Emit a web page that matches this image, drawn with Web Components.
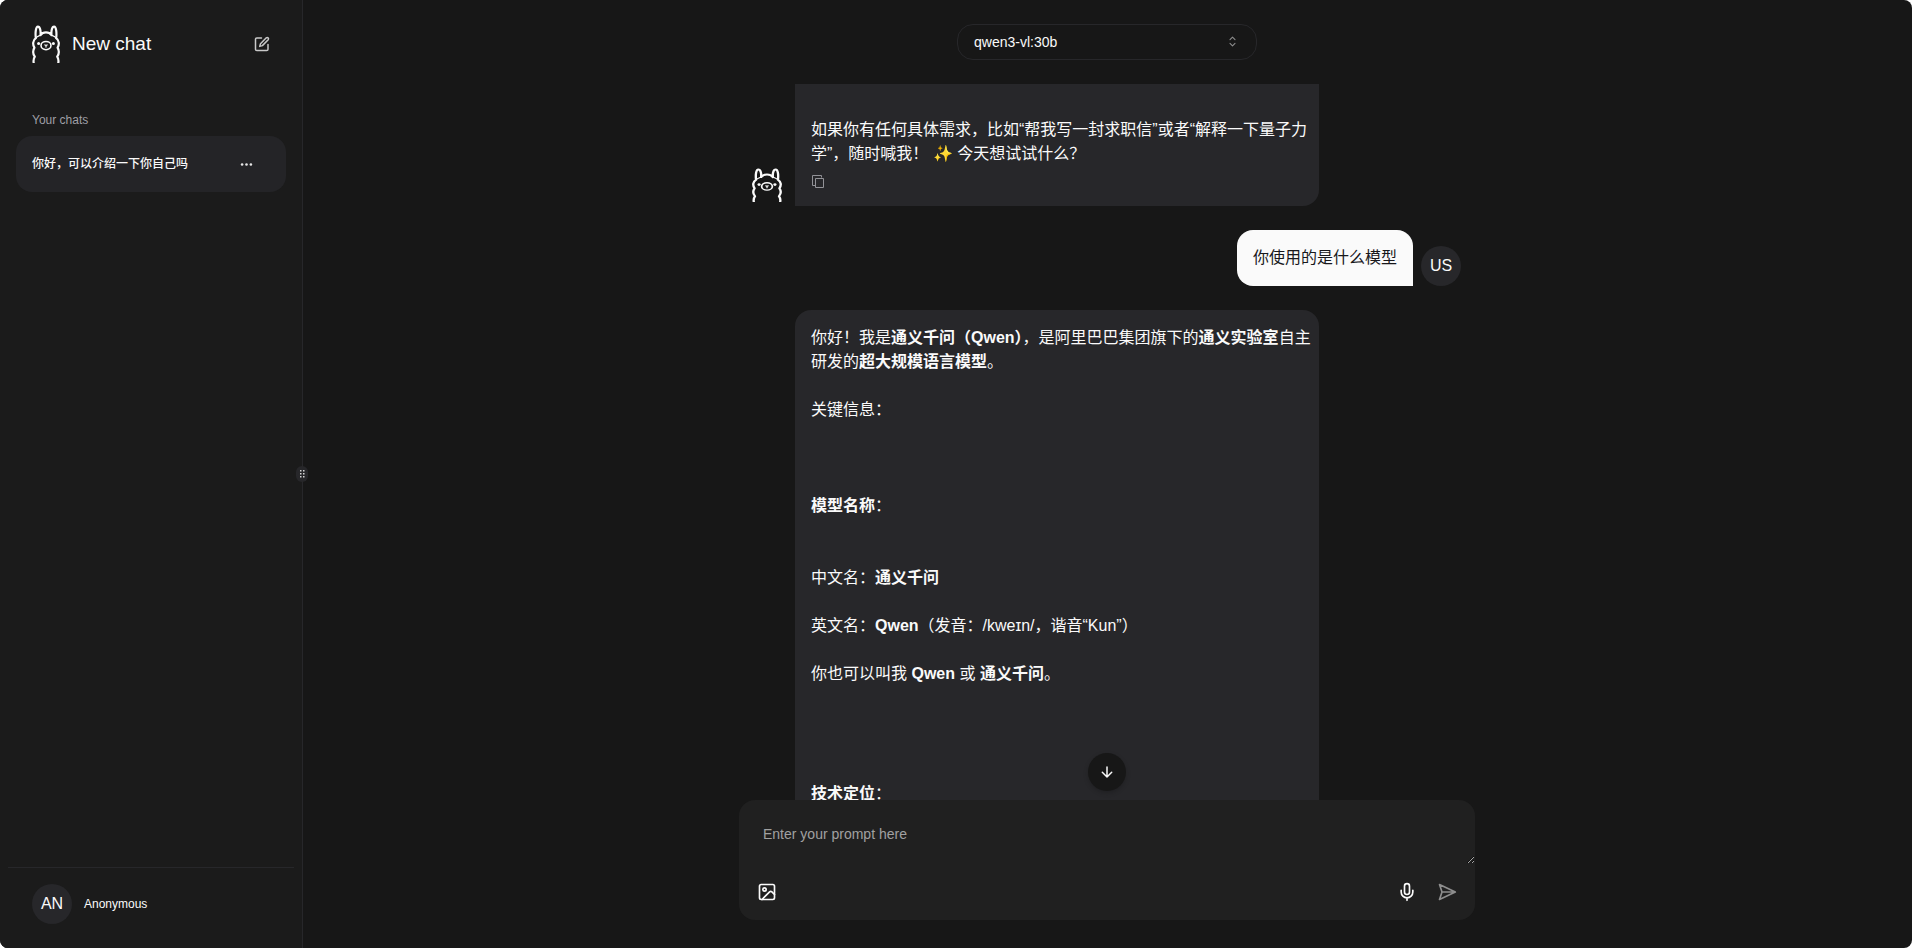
<!DOCTYPE html>
<html lang="zh-CN">
<head>
<meta charset="utf-8">
<meta name="viewport" content="width=device-width, initial-scale=1">
<title>Ollama UI</title>
<style>
  html { background: #fff; }
  body { margin: 0; color: #fafafa; font: 16px/24px "Liberation Sans", "Noto Sans CJK SC", sans-serif; }
</style>
</head>
<body>
<chat-app></chat-app>
<script>
const define = (name, markup) => {
  const template = document.createElement('template');
  template.innerHTML = '<style>*{box-sizing:border-box}button{font:inherit;color:inherit;background:none;border:0;padding:0;cursor:pointer}svg{display:block}</style>' + markup;
  customElements.define(name, class extends HTMLElement {
    constructor() {
      super();
      this.attachShadow({ mode: 'open' }).append(template.content.cloneNode(true));
    }
  });
};

define('llama-logo', `
<style>:host{display:block;width:28px;height:38px} svg{width:100%;height:100%}</style>
<svg viewBox="0 0 28 38" preserveAspectRatio="none" fill="none" stroke="#fafafa" stroke-width="2.200" stroke-linecap="round" stroke-linejoin="round" aria-hidden="true">
  <path d="M1.700 38C1.300 35.800 1.600 33.500 2.800 31.600C.9 29 .8 25.500 2.400 22.600C.4 19.500 .8 15.400 3.800 13.200C3.200 8 3.700 1.700 5.900 1.700S8.900 6 8.500 10.200C11 6.300 17 6.300 19.500 10.200C19.100 6 19.900 1.700 22.100 1.700S24.800 8 24.200 13.200C27.200 15.400 27.600 19.500 25.600 22.600C27.200 25.500 27.100 29 25.200 31.600C26.400 33.500 26.700 35.800 26.300 38"/>
  <path d="M3.800 13.200C5.100 11.400 6.800 11 8.500 10.200M24.200 13.200C22.900 11.400 21.200 11 19.500 10.200" stroke-width="1.200"/>
  <ellipse cx="14" cy="20.600" rx="5" ry="4.100" stroke-width="1.600"/>
  <path d="M12.900 19.900l1.100.7 1.100-.7M14 20.600v1.500" stroke-width="1.200"/>
  <circle cx="6.600" cy="18.500" r="1.500" fill="#fafafa" stroke="none"/><circle cx="21.400" cy="18.500" r="1.500" fill="#fafafa" stroke="none"/>
</svg>`);

define('user-avatar', `
<style>:host{display:flex;align-items:center;justify-content:center;flex:none;width:40px;height:40px;border-radius:50%;background:#27272a;color:#fafafa}</style>
<slot></slot>`);

define('chat-sidebar', `
<style>
:host{display:flex;flex-direction:column;position:relative;box-sizing:border-box;width:302px;flex:none;background:#1b1b1b;box-shadow:1px 0 #27272a;padding:16px 8px 0}
.new{display:flex;align-items:center;gap:12px;width:100%;height:56px;padding:0 24px;text-align:left;font-size:19px}
.new span{flex:1}
h2{margin:40px 24px 0;font-size:12px;line-height:16px;font-weight:400;color:#9f9fa6}
nav{padding:8px 8px 0}
.item{display:flex;align-items:center;height:56px;padding:0 32px 0 16px;border-radius:16px;background:#242427;font-size:12px;line-height:20px;font-weight:500}
a{flex:1;color:inherit;text-decoration:none}
footer{margin-top:auto;border-top:1px solid #27272a;padding:16px 24px 24px}
.user{display:flex;align-items:center;gap:12px}
.user span{font-size:12px}
.grip{position:absolute;right:-6px;top:calc(50% - 8px);display:flex;align-items:center;justify-content:center;width:12px;height:16px;border-radius:6px;background:#27272a;cursor:col-resize}
</style>
<button class="new"><llama-logo></llama-logo><span>New chat</span>
<svg width="16" height="16" viewBox="0 0 16 16" fill="none" stroke="#c9c9c9" stroke-width="1.500" stroke-linecap="round" stroke-linejoin="round" aria-hidden="true"><path d="M7.500 2H2.800Q1.500 2 1.500 3.300v9.900q0 1.300 1.300 1.300h9.900q1.300 0 1.300-1.300V8.500M12.300 1.800a1.350 1.350 0 0 1 1.900 1.900L8.400 9.600l-2.700.800.8-2.700z"/></svg></button>
<h2>Your chats</h2>
<nav><div class="item"><a href="#chat">你好，可以介绍一下你自己吗</a>
<button aria-label="Chat options"><svg width="15" height="15" viewBox="0 0 15 15" fill="#e8e8e8"><circle cx="3.100" cy="7.500" r="1.300"/><circle cx="7.500" cy="7.500" r="1.300"/><circle cx="11.900" cy="7.500" r="1.300"/></svg></button></div></nav>
<footer><button class="user"><user-avatar>AN</user-avatar><span>Anonymous</span></button></footer>
<div class="grip" role="separator" aria-label="Resize sidebar"><svg width="6" height="10" viewBox="0 0 6 10" fill="#d4d4d4"><path d="M1 1h1.500v1.500H1zM4 1h1.500v1.500H4zM1 4h1.500v1.500H1zM4 4h1.500v1.500H4zM1 7h1.500v1.500H1zM4 7h1.500v1.500H4z"/></svg></div>`);

define('model-picker', `
<style>
:host{display:flex;justify-content:center;padding:24px 0}
div{position:relative;width:300px;max-width:100%}
select{appearance:none;display:block;width:100%;height:36px;padding:0 16px;border:1px solid #27272a;border-radius:16px;background:#171717;color:#fafafa;font:14px/20px "Liberation Sans",sans-serif}
svg{position:absolute;right:17px;top:10px;pointer-events:none}
</style>
<div><select aria-label="Model"><option>qwen3-vl:30b</option></select>
<svg width="15" height="15" viewBox="0 0 15 15" fill="none" stroke="#8c8c8c" stroke-width="1.100" stroke-linecap="round" stroke-linejoin="round"><path d="M5 5.600L7.500 3.200l2.500 2.400M5 9.400l2.500 2.400 2.500-2.400"/></svg></div>`);

define('assistant-message', `
<style>
:host{display:flex;align-items:flex-end;gap:8px}
llama-logo{flex:none;width:30px;height:34px;margin:0 5px 4px}
.bubble{width:524px;padding:16px 4px 16px 16px;border-radius:16px 16px 16px 0;background:#27272a}
:host([continued]) .bubble{border-top-left-radius:0;border-top-right-radius:0;padding-top:34px}
.copy{display:block;margin-top:8px}
</style>
<llama-logo></llama-logo>
<div class="bubble"><slot></slot>
<button class="copy" aria-label="Copy message"><svg width="16" height="16" viewBox="0 0 16 16" fill="none" stroke="#929297"><path d="M4.500 11.500h-3v-10h9v2M4.500 4.500h8v9h-8z"/></svg></button></div>`);

define('user-message', `
<style>
:host{display:flex;align-items:flex-end;justify-content:flex-end;gap:8px}
.bubble{padding:16px;border-radius:16px 16px 0 16px;background:#fafafa;color:#18181b}
</style>
<div class="bubble"><slot></slot></div><user-avatar>US</user-avatar>`);

define('prompt-box', `
<style>
:host{display:block;flex:none;border-radius:16px;background:#202020;overflow:hidden}
textarea{display:block;width:100%;height:64px;padding:24px 24px 0;border:0;outline:0;background:transparent;color:#fafafa;font:14px/20px "Liberation Sans","Noto Sans CJK SC",sans-serif;resize:vertical}
textarea::placeholder{color:#a1a1a1}
.bar{display:flex;align-items:center;gap:20px;height:56px;padding:0 18px}
.bar button:first-child{margin-right:auto}
svg{fill:none;stroke:#fafafa;stroke-width:2;stroke-linecap:round;stroke-linejoin:round}
button:disabled svg{stroke:#8d8d8d}
</style>
<textarea aria-label="Prompt" placeholder="Enter your prompt here"></textarea>
<div class="bar">
<button aria-label="Attach image"><svg width="20" height="20" viewBox="0 0 24 24"><rect x="3" y="3" width="18" height="18" rx="2"/><circle cx="9" cy="9" r="2"/><path d="m21 15-3.100-3.100a2 2 0 0 0-2.800 0L6 21"/></svg></button>
<button aria-label="Voice input"><svg width="20" height="20" viewBox="0 0 24 24"><path d="M12 2a3 3 0 0 0-3 3v7a3 3 0 0 0 6 0V5a3 3 0 0 0-3-3ZM19 10v2a7 7 0 0 1-14 0v-2M12 19v3"/></svg></button>
<button aria-label="Send" disabled><svg width="20" height="20" viewBox="0 0 24 24"><path d="m3 3 3 9-3 9 19-9ZM6 12h16"/></svg></button>
</div>`);

define('message-list', `
<style>
:host{display:block;position:relative;flex:1;min-height:0}
.scroll{display:flex;flex-direction:column;gap:24px;height:100%;overflow:hidden;padding:0 14px 0 8px}
.down{position:absolute;left:50%;bottom:9px;display:flex;align-items:center;justify-content:center;width:38px;height:38px;margin-left:-19px;border-radius:50%;background:#171717;box-shadow:0 2px 5px #0003}
</style>
<div class="scroll"><slot></slot></div>
<button class="down" aria-label="Scroll to bottom"><svg width="16" height="16" viewBox="0 0 16 16" fill="none" stroke="#fafafa" stroke-width="1.500" stroke-linecap="round" stroke-linejoin="round"><path d="M8 3v10M3.300 8.300L8 13l4.700-4.700"/></svg></button>`);

define('chat-app', `
<style>
:host{display:flex;height:100vh;border-radius:8px;overflow:hidden;background:#171717}
main{display:flex;flex-direction:column;flex:1;min-width:0}
.column{display:flex;flex-direction:column;flex:1;min-height:0;width:100%;max-width:736px;margin:0 auto;padding-bottom:28px}
p{margin:0 0 24px} p.end{margin:0}
.gap{margin-bottom:72px} .mid{margin-bottom:48px} .wide{margin-bottom:96px}
b{font-weight:700}
assistant-message,user-message{flex:none}
</style>
<chat-sidebar></chat-sidebar>
<main>
<model-picker></model-picker>
<div class="column">
<message-list>
<assistant-message continued><p class="end">如果你有任何具体需求，比如“帮我写一封求职信”或者“解释一下量子力学”，随时喊我！ ✨ 今天想试试什么？</p></assistant-message>
<user-message>你使用的是什么模型</user-message>
<assistant-message>
<p>你好！我是<b>通义千问（Qwen）</b>，是阿里巴巴集团旗下的<b>通义实验室</b>自主研发的<b>超大规模语言模型</b>。</p>
<p class="gap">关键信息：</p>
<p class="mid"><b>模型名称</b>：</p>
<p>中文名：<b>通义千问</b></p>
<p>英文名：<b>Qwen</b>（发音：/kweɪn/，谐音“Kun”）</p>
<p class="wide">你也可以叫我 <b>Qwen</b> 或 <b>通义千问</b>。</p>
<p class="end"><b>技术定位</b>：</p>
</assistant-message>
</message-list>
<prompt-box></prompt-box>
</div>
</main>`);
</script>
</body>
</html>
